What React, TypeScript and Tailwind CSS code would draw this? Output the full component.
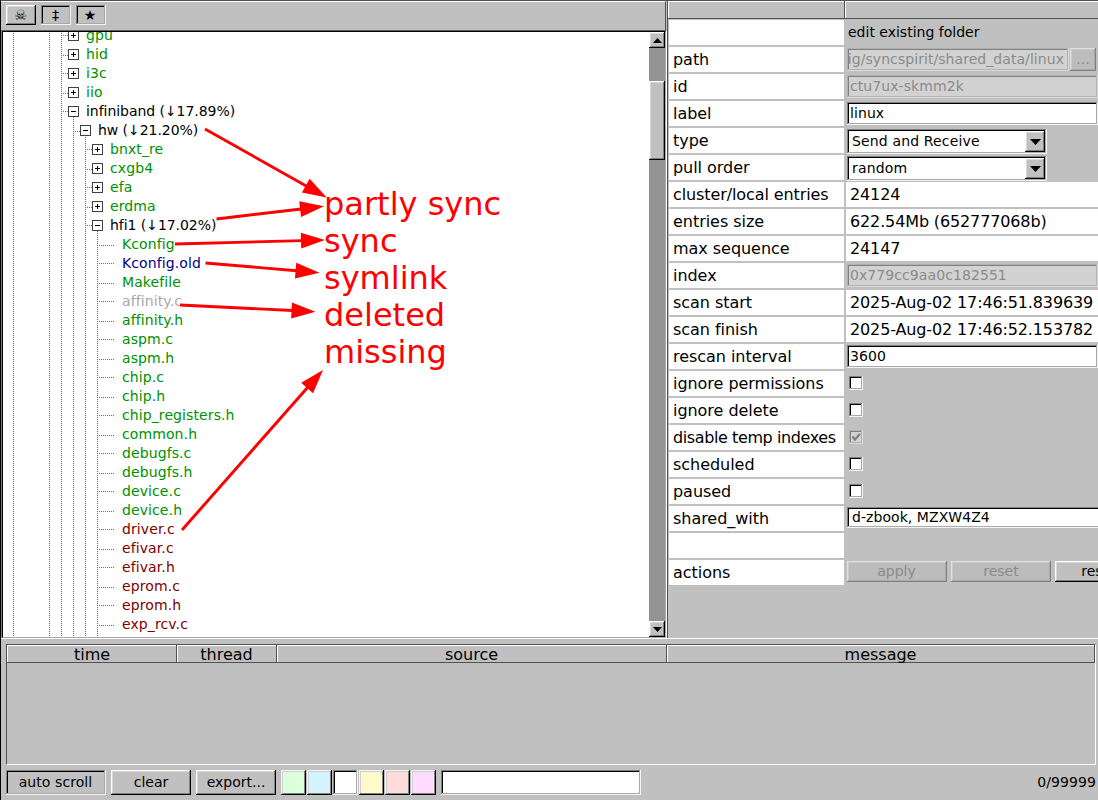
import React from "react";

const UP =
  "bg-[#c0c0c0] shadow-[inset_-1px_-1px_#000,inset_1px_1px_#fff,inset_-2px_-2px_#808080,inset_2px_2px_#d8d8d8]";
const UP_OFF =
  "bg-[#bcbcbc] text-[#8b8b8b] shadow-[inset_-1px_-1px_#808080,inset_1px_1px_#e0e0e0,inset_-2px_-2px_#a8a8a8,inset_2px_2px_#cacaca]";
const DOWN =
  "shadow-[inset_-1px_-1px_#f4f4f4,inset_1px_1px_#808080,inset_-2px_-2px_#a9a9a9,inset_2px_2px_#000]";
const DOWN_OFF =
  "bg-[#d2d2d2] text-[#8b8b8b] shadow-[inset_-1px_-1px_#d8d8d8,inset_1px_1px_#b0b0b0,inset_-2px_-2px_#b4b4b4,inset_2px_2px_#808080]";

type Tone = "sync" | "partly" | "symlink" | "deleted" | "missing";
const TONES: Record<Tone, string> = {
  sync: "text-[#009100] tracking-[0.1px]",
  partly: "text-black tracking-[-0.05px]",
  symlink: "text-[#000088] tracking-[0.1px]",
  deleted: "text-[#a9a9a9] tracking-[0.1px]",
  missing: "text-[#800000] tracking-[0.1px]",
};

type Node = { name: string; level: number; icon?: "+" | "-"; tone: Tone };
const file = (name: string, tone: Tone): Node => ({ name, level: 3, tone });
const NODES: Node[] = [
  { name: "gpu", level: 0, icon: "+", tone: "sync" },
  { name: "hid", level: 0, icon: "+", tone: "sync" },
  { name: "i3c", level: 0, icon: "+", tone: "sync" },
  { name: "iio", level: 0, icon: "+", tone: "sync" },
  { name: "infiniband (↓17.89%)", level: 0, icon: "-", tone: "partly" },
  { name: "hw (↓21.20%)", level: 1, icon: "-", tone: "partly" },
  { name: "bnxt_re", level: 2, icon: "+", tone: "sync" },
  { name: "cxgb4", level: 2, icon: "+", tone: "sync" },
  { name: "efa", level: 2, icon: "+", tone: "sync" },
  { name: "erdma", level: 2, icon: "+", tone: "sync" },
  { name: "hfi1 (↓17.02%)", level: 2, icon: "-", tone: "partly" },
  file("Kconfig", "sync"),
  file("Kconfig.old", "symlink"),
  file("Makefile", "sync"),
  file("affinity.c", "deleted"),
  ...["affinity.h", "aspm.c", "aspm.h", "chip.c", "chip.h", "chip_registers.h", "common.h", "debugfs.c", "debugfs.h", "device.c", "device.h"].map((n) => file(n, "sync")),
  ...["driver.c", "efivar.c", "efivar.h", "eprom.c", "eprom.h", "exp_rcv.c"].map((n) => file(n, "missing")),
];

const INDENT = ["pl-[65px]", "pl-[77px]", "pl-[89px]", "pl-[119px]"];

function Connectors() {
  return (
    <svg className="absolute left-0 top-0" width="646" height="605" viewBox="3 32 646 605" shapeRendering="crispEdges" stroke="#707070" strokeWidth="1" strokeDasharray="1 1">
      {[[13, 33], [49, 33], [61, 33], [73, 117], [85, 137], [97, 231]].map(([x, y]) => (
        <line key={x} x1={x + 0.5} x2={x + 0.5} y1={y} y2={637} />
      ))}
      {NODES.map((n, i) => {
        const c = 35 + 19 * i;
        const y = (c % 2 ? c : c + 1) + 0.5;
        const x = 61 + 12 * n.level;
        return <line key={i} x1={x} x2={x + (n.icon ? 7 : 18)} y1={y} y2={y} />;
      })}
    </svg>
  );
}

function Tree() {
  return (
    <div className="relative h-[605px] w-[646px] overflow-hidden bg-white">
      <Connectors />
      <div className="relative -mt-[6px]">
        {NODES.map((n) => (
          <div key={n.name} className={`flex h-[19px] items-center text-[14px] leading-[19px] ${INDENT[n.level]} ${TONES[n.tone]}`}>
            {n.icon && (
              <svg width="11" height="11" className="mr-[7px] shrink-0" shapeRendering="crispEdges">
                <rect x="0.5" y="0.5" width="10" height="10" fill="#fff" stroke="#404040" />
                <path d={n.icon === "+" ? "M3 5.5h5M5.5 3v5" : "M3 5.5h5"} stroke="#000" />
              </svg>
            )}
            <span className="whitespace-pre">{n.name}</span>
          </div>
        ))}
      </div>
    </div>
  );
}

function Triangle({ up = false, wide = false }: { up?: boolean; wide?: boolean }) {
  return wide ? (
    <svg width="11" height="6"><path d="M0 0h11L5.500 6z" /></svg>
  ) : (
    <svg width="9" height="5"><path d={up ? "M0 5h9L4.500 0z" : "M0 0h9L4.500 5z"} /></svg>
  );
}

function Scrollbar() {
  return (
    <div className="flex h-[605px] w-4 flex-col bg-[#949494]">
      <div className={`flex h-4 items-center justify-center ${UP}`}><Triangle up /></div>
      <div className={`mt-[33px] h-[79px] ${UP}`} />
      <div className={`mt-auto flex h-4 items-center justify-center ${UP}`}><Triangle /></div>
    </div>
  );
}

const ARROWS = [
  [205, 129, 326.7, 197.5],
  [216.5, 219, 324, 206.3],
  [175, 244, 325, 240],
  [205.5, 263, 319.5, 272.7],
  [180, 305, 315.5, 311.7],
  [182, 530, 323, 370],
];

function Annotations() {
  return (
    <div className="pointer-events-none absolute -left-px -top-px h-[636px] w-[660px] text-[#ff0000]">
      <svg width="660" height="636" className="absolute left-0 top-0">
        {ARROWS.map(([x1, y1, x2, y2]) => {
          const len = Math.hypot(x2 - x1, y2 - y1);
          const ux = (x2 - x1) / len;
          const uy = (y2 - y1) / len;
          const bx = x2 - ux * 24;
          const by = y2 - uy * 24;
          return (
            <g key={y1} fill="#f00">
              <line x1={x1} y1={y1} x2={bx + ux} y2={by + uy} stroke="#f00" strokeWidth="2.9" />
              <path d={`M${x2} ${y2}L${bx - uy * 7.9} ${by + ux * 7.9}L${bx + uy * 7.9} ${by - ux * 7.9}Z`} />
            </g>
          );
        })}
      </svg>
      <div className="absolute left-[324px] top-[186px] whitespace-pre text-[32px] leading-[37px]">
        {"partly sync\nsync\nsymlink\ndeleted\nmissing"}
      </div>
    </div>
  );
}

function Field({ text, off = false }: { text: string; off?: boolean }) {
  return (
    <div className={`flex h-[23px] w-[251px] shrink-0 items-center overflow-hidden px-[3px] text-[14px] tracking-[0.08px] ${off ? DOWN_OFF : "bg-white " + DOWN}`}>{text}</div>
  );
}

function Select({ text }: { text: string }) {
  return (
    <div className={`flex h-[25px] w-[200px] items-center bg-white pl-[5px] pr-[2px] text-[14px] tracking-[0.15px] ${DOWN}`}>
      <span className="grow">{text}</span>
      <div className={`flex h-[21px] w-5 items-center justify-center ${UP}`}><Triangle wide /></div>
    </div>
  );
}

function Check({ on = false }: { on?: boolean }) {
  return (
    <div className={`ml-[2px] mt-1 h-[14px] w-[14px] ${on ? DOWN_OFF : "bg-white " + DOWN}`}>
      {on && (
        <svg width="14" height="14"><path d="M3.500 6.500l2.500 3L11 3.800" fill="none" stroke="#808080" strokeWidth="2.200" /></svg>
      )}
    </div>
  );
}

const ROWS: { label: string; tight?: string; value?: string; node?: React.ReactNode }[] = [
  { label: "", node: <span className="pl-px pt-px text-[14px] leading-[21px]">edit existing folder</span> },
  {
    label: "path",
    node: (
      <>
        <div className={`flex h-[23px] w-[222px] items-center overflow-hidden px-[2px] ${DOWN_OFF}`}>
          <div className="flex w-[218px] justify-end overflow-hidden pr-[3px] text-[14px] tracking-[0.06px]">
            <span className="whitespace-pre">ig/syncspirit/shared_data/linux</span>
          </div>
        </div>
        <div className={`ml-px flex h-[23px] w-[26px] items-center justify-center text-[14px] ${UP_OFF}`}>...</div>
      </>
    ),
  },
  { label: "id", node: <Field text="ctu7ux-skmm2k" off /> },
  { label: "label", node: <Field text="linux" /> },
  { label: "type", node: <Select text="Send and Receive" /> },
  { label: "pull order", node: <Select text="random" /> },
  { label: "cluster/local entries", tight: "tracking-[-0.1px]", value: "24124" },
  { label: "entries size", value: "622.54Mb (652777068b)" },
  { label: "max sequence", value: "24147" },
  { label: "index", node: <Field text="0x779cc9aa0c182551" off /> },
  { label: "scan start", value: "2025-Aug-02 17:46:51.839639" },
  { label: "scan finish", value: "2025-Aug-02 17:46:52.153782" },
  { label: "rescan interval", node: <Field text="3600" /> },
  { label: "ignore permissions", node: <Check /> },
  { label: "ignore delete", node: <Check /> },
  { label: "disable temp indexes", tight: "tracking-[-0.4px]", node: <Check on /> },
  { label: "scheduled", node: <Check /> },
  { label: "paused", node: <Check /> },
  {
    label: "shared_with",
    node: <div className={`flex h-[21px] w-[300px] shrink-0 items-center bg-white pl-[5px] text-[14px] tracking-[0.06px] ${DOWN}`}>d-zbook, MZXW4Z4</div>,
  },
  { label: "" },
  {
    label: "actions",
    node: (
      <div className="flex shrink-0 gap-1 text-[14px]">
        <div className={`flex h-[21px] w-[100px] items-center justify-center pr-px ${UP_OFF}`}>apply</div>
        <div className={`flex h-[21px] w-[100px] items-center justify-center ${UP_OFF}`}>reset</div>
        <div className={`flex h-[21px] w-[100px] items-center justify-center pr-px ${UP}`}>rescan</div>
      </div>
    ),
  },
];

const HEAD = "shadow-[inset_1px_1px_#fff]";

function Details() {
  return (
    <div className="flex h-[637px] w-[431px] flex-col overflow-hidden border-l border-[#505050]">
      <div className="flex h-[18px] border-b border-[#505050]">
        <div className={`w-[177px] border-r border-[#505050] ${HEAD}`} />
        <div className={`grow ${HEAD}`} />
      </div>
      <div className="flex flex-col pl-px pt-px">
        {ROWS.map((r, i) => (
          <div key={i} className="flex h-[27px] items-start">
            <div className={`h-[25px] w-[175px] shrink-0 whitespace-pre bg-white pl-1 text-[16px] leading-[25px] ${r.tight ?? "tracking-[-0.04px]"}`}>{r.label}</div>
            {r.value ? (
              <div className="ml-[2px] h-[25px] grow whitespace-pre bg-white pl-1 text-[16px] leading-[25px] tracking-[-0.13px]">{r.value}</div>
            ) : (
              <div className="ml-[3px] flex w-[251px] items-start overflow-hidden pt-px">{r.node}</div>
            )}
          </div>
        ))}
      </div>
    </div>
  );
}

const SWATCHES = ["bg-[#dcffdc]", "bg-[#d2f3ff]", "bg-white", "bg-[#fffacb]", "bg-[#ffdcdc]", "bg-[#ffdcff]"];
const GLOSS = "shadow-[inset_-1px_-1px_#000,inset_1px_1px_#f4f4f4,inset_-2px_-2px_#808080,inset_2px_2px_#d0d0d0]";

function LogPanel() {
  return (
    <div className="px-[5px] pt-[5px]">
      <div className="h-[121px] w-[1090px] border border-b-white border-l-[#505050] border-r-white border-t-[#505050]">
        <div className="flex h-[18px] border-b border-[#505050] text-center text-[16px] leading-[19px]">
          <div className={`w-[170px] border-r border-[#505050] pl-px ${HEAD}`}>time</div>
          <div className={`w-[100px] border-r border-[#505050] ${HEAD}`}>thread</div>
          <div className={`w-[390px] border-r border-[#505050] ${HEAD}`}>source</div>
          <div className={`grow border-r border-[#505050] ${HEAD}`}>message</div>
        </div>
      </div>
      <div className="mt-[5px] flex h-[25px] items-center text-[14px]">
        <div className={`flex h-[25px] w-[100px] items-center justify-center pr-px tracking-[0.08px] ${DOWN}`}>auto scroll</div>
        <div className={`ml-[5px] flex h-[25px] w-[80px] items-center justify-center ${UP}`}>clear</div>
        <div className={`ml-[5px] flex h-[25px] w-[80px] items-center justify-center ${UP}`}>export...</div>
        <div className="ml-[5px] flex gap-px">
          {SWATCHES.map((c, i) => (
            <div key={c} className={`h-[25px] w-[25px] ${c} ${i === 2 ? DOWN : GLOSS}`} />
          ))}
        </div>
        <div className={`ml-[5px] h-[25px] w-[200px] bg-white ${DOWN}`} />
        <span className="-mr-[3px] ml-auto tracking-[0.1px]">0/99999</span>
      </div>
    </div>
  );
}

export default function App() {
  return (
    <div className="relative h-[800px] w-[1098px] overflow-hidden border-l border-t border-l-black border-t-[#505050] bg-[#c0c0c0] font-['DejaVu_Sans',sans-serif] text-black">
      <div className="flex h-[637px]">
        <div className="w-[666px] shrink-0">
          <div className="flex h-[29px] w-[665px] gap-[5px] border-r border-t border-r-[#505050] border-t-white pl-[5px] pt-[3px] text-[14px]">
            <div className={`flex h-5 w-[30px] items-center justify-center pr-px ${UP}`}>☠</div>
            <div className={`flex h-5 w-[30px] items-center justify-center pr-px ${DOWN}`}>‡</div>
            <div className={`flex h-5 w-[30px] items-center justify-center pr-[2px] ${DOWN}`}>★</div>
          </div>
          <div className="h-[608px] w-[666px] border-l border-r border-t border-l-[#808080] border-r-white border-t-[#606060]">
            <div className="flex h-[607px] w-[664px] border border-b-[#a9a9a9] border-l-black border-r-[#a9a9a9] border-t-black">
              <Tree />
              <Scrollbar />
            </div>
          </div>
        </div>
        <Details />
      </div>
      <div className="h-px bg-white" />
      <LogPanel />
      <Annotations />
    </div>
  );
}
